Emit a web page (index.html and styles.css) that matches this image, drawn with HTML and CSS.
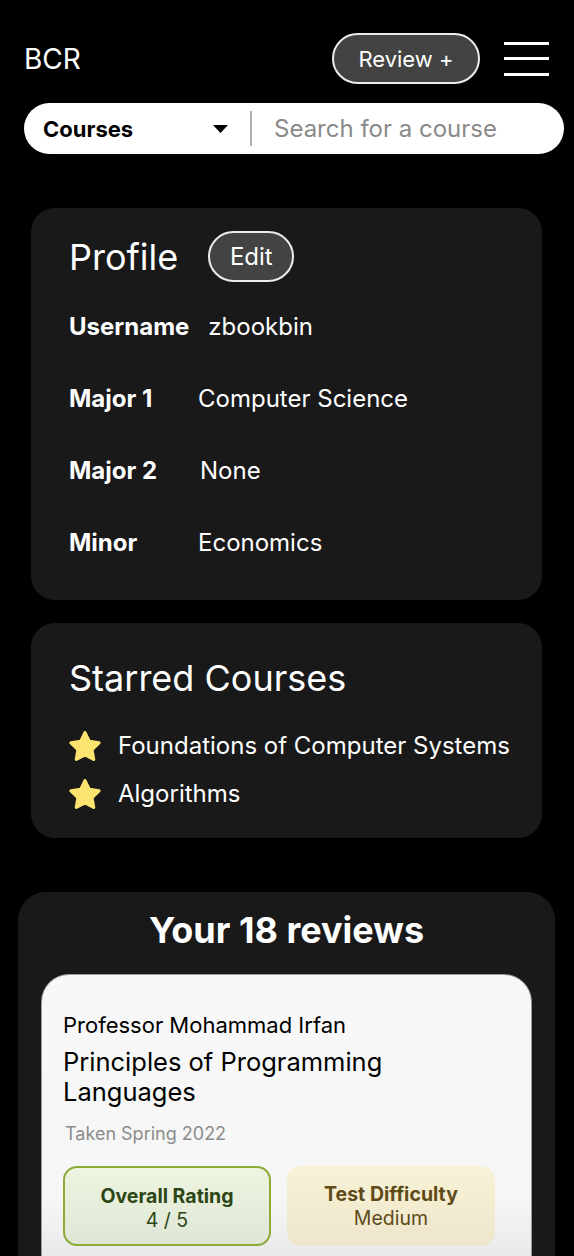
FILE: index.html
```html
<!DOCTYPE html>
<html lang="en">
<head>
<meta charset="utf-8">
<title>BCR Profile</title>
<link rel="stylesheet" href="styles.css">
</head>
<body>
<div class="page">
  <header class="topbar">
    <div class="logo">BCR</div>
    <div class="top-actions">
      <button class="pill-btn review-btn">Review +</button>
      <div class="hamburger"><span></span><span></span><span></span></div>
    </div>
  </header>

  <div class="search">
    <div class="search-select">
      <span class="select-label">Courses</span>
      <svg class="caret" width="15" height="8" viewBox="0 0 15 8"><path d="M0 0H15L7.5 8Z" fill="#000"/></svg>
    </div>
    <div class="search-divider"></div>
    <div class="search-input">Search for a course</div>
  </div>

  <section class="card profile">
    <div class="card-head">
      <h2 class="card-title">Profile</h2>
      <button class="pill-btn edit-btn">Edit</button>
    </div>
    <div class="rows">
      <div class="row"><span class="label">Username</span><span class="value">zbookbin</span></div>
      <div class="row"><span class="label">Major 1</span><span class="value">Computer Science</span></div>
      <div class="row"><span class="label">Major 2</span><span class="value v-shift">None</span></div>
      <div class="row"><span class="label">Minor</span><span class="value">Economics</span></div>
    </div>
  </section>

  <section class="card starred">
    <h2 class="card-title">Starred Courses</h2>
    <ul class="star-list">
      <li class="star-item">
        <svg class="star" width="32" height="30" viewBox="2 1.8 20 19"><path d="M12 2.8l2.75 5.6 6.15.9-4.45 4.33 1.05 6.13L12 16.87l-5.5 2.89 1.05-6.13L3.1 9.3l6.15-.9z" fill="#fde36f" stroke="#fde36f" stroke-width="2" stroke-linejoin="round"/></svg>
        <span>Foundations of Computer Systems</span>
      </li>
      <li class="star-item">
        <svg class="star" width="32" height="30" viewBox="2 1.8 20 19"><path d="M12 2.8l2.75 5.6 6.15.9-4.45 4.33 1.05 6.13L12 16.87l-5.5 2.89 1.05-6.13L3.1 9.3l6.15-.9z" fill="#fde36f" stroke="#fde36f" stroke-width="2" stroke-linejoin="round"/></svg>
        <span>Algorithms</span>
      </li>
    </ul>
  </section>

  <section class="card reviews">
    <h2 class="reviews-title">Your 18 reviews</h2>
    <article class="review">
      <div class="prof">Professor Mohammad Irfan</div>
      <div class="course">Principles of Programming Languages</div>
      <div class="taken">Taken Spring 2022</div>
      <div class="badges">
        <div class="badge badge-green">
          <div class="badge-title">Overall Rating</div>
          <div class="badge-value">4 / 5</div>
        </div>
        <div class="badge badge-yellow">
          <div class="badge-title">Test Difficulty</div>
          <div class="badge-value">Medium</div>
        </div>
      </div>
    </article>
  </section>
</div>
</body>
</html>
```

FILE: styles.css
```css
* { box-sizing: border-box; }
html, body { margin: 0; padding: 0; background: #000; }
body {
  font-family: Inter, "Noto Sans", "Liberation Sans", sans-serif;
  color: #fff;
  overflow: hidden;
  height: 1256px;
}
h2, ul { margin: 0; padding: 0; }
button { font-family: inherit; }

.page {
  padding-top: 33px;
}

.topbar {
  display: flex;
  align-items: center;
  justify-content: space-between;
  padding: 0 25px 0 24px;
  height: 51px;
}
.logo { font-size: 28px; line-height: 32px; }
.top-actions { display: flex; align-items: center; gap: 24px; }
.pill-btn {
  background: #434343;
  color: #fff;
  border: 2px solid #ececec;
  border-radius: 999px;
  cursor: pointer;
  padding: 0;
}
.review-btn {
  width: 148px;
  height: 51px;
  font-size: 22px;
}
.hamburger {
  width: 45px;
  height: 34px;
  display: flex;
  flex-direction: column;
  justify-content: space-between;
}
.hamburger span { display: block; height: 3px; background: #fff; }

.search {
  margin: 19px 0 0 24px;
  width: 540px;
  height: 51px;
  background: #fff;
  border-radius: 999px;
  display: flex;
  align-items: center;
}
.search-select {
  width: 226px;
  padding: 0 22px 0 19px;
  display: flex;
  align-items: center;
  justify-content: space-between;
}
.select-label { color: #000; font-weight: 700; font-size: 22px; }
.caret { display: block; }
.search-divider { width: 2px; height: 35px; background: #b0b0b0; }
.search-input { color: #8a8a8a; font-size: 24px; padding-left: 22px; }

.card {
  background: #191919;
  border-radius: 24px;
}
.card-title { font-size: 36px; font-weight: 400; line-height: 42px; }

.profile {
  margin: 54px 32px 0 31px;
  padding: 23px 38px 43px 38px;
}
.card-head { display: flex; align-items: center; gap: 30px; }
.edit-btn { width: 86px; height: 51px; font-size: 24px; }
.rows { margin-top: 31px; display: flex; flex-direction: column; gap: 44px; }
.row { display: flex; align-items: center; gap: 19px; font-size: 24px; line-height: 28px; }
.label { font-weight: 700; min-width: 110px; }
.v-shift { margin-left: 2px; }

.starred {
  margin: 23px 32px 0 31px;
  padding: 34px 20px 29px 38px;
}
.star-list { list-style: none; margin-top: 32px; display: flex; flex-direction: column; gap: 18px; }
.star-item { display: flex; align-items: center; gap: 17px; font-size: 24px; line-height: 30px; white-space: nowrap; }
.star { display: block; flex: none; }

.reviews {
  margin: 54px 19px 0 18px;
  border-radius: 28px;
  padding: 17px 23px 40px 23px;
}
.reviews-title { text-align: center; font-size: 36px; font-weight: 700; line-height: 42px; }
.review {
  margin-top: 23px;
  background: linear-gradient(#f8f8f8 0%, #f6f6f6 70%, #e2e2e2 100%);
  border: 1px solid #9a9a9a;
  border-radius: 28px;
  padding: 38px 22px 20px 21px;
  color: #000;
  height: 320px;
}
.prof { font-size: 22px; line-height: 24px; }
.course { margin-top: 10px; font-size: 25.5px; line-height: 30px; width: 360px; }
.taken { margin-top: 16px; font-size: 18px; line-height: 22px; color: #8c8c8c; padding-left: 2px; }
.badges { margin-top: 21px; display: flex; gap: 16px; }
.badge {
  width: 208px;
  height: 80px;
  border-radius: 14px;
  display: flex;
  flex-direction: column;
  align-items: center;
  justify-content: center;
  font-size: 19.5px;
  line-height: 24px;
}
.badge-title { font-weight: 700; }
.badge-green {
  background: linear-gradient(#edf5e0, #dfe6d6);
  border: 2px solid #8aab38;
  color: #2c4614;
  padding-top: 3px;
}
.badge-yellow {
  background: linear-gradient(#f8f2d6, #ede6cc);
  color: #5e4b19;
}
```
